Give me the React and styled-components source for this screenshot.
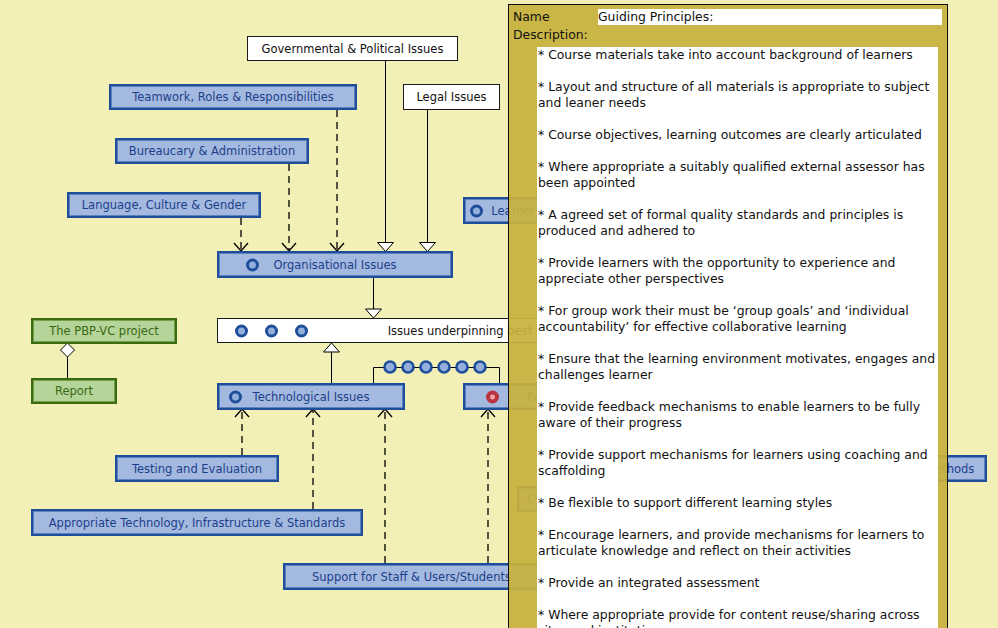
import React from "react";
import styled, { createGlobalStyle, css } from "styled-components";

const Global = createGlobalStyle`
  html, body { margin: 0; padding: 0; background: #f2f0b7; }
  #root { width: 998px; height: 628px; }
`;

const Canvas = styled.div`
  position: relative;
  width: 998px;
  height: 628px;
  overflow: hidden;
  background: #f2f0b7;
  font-family: "DejaVu Sans", "Noto Sans", sans-serif;
`;

const Wires = styled.svg`
  position: absolute;
  left: 0;
  top: 0;
`;

const variants = {
  blue: css`
    background: #a3b9e0;
    border: 2px solid #1e4d9a;
    box-shadow: inset 0 0 0 1px #5d80bf;
    color: #1d3f8a;
  `,
  white: css`
    background: #ffffff;
    border: 1px solid #1a1a1a;
    color: #111;
  `,
  green: css`
    background: #b5d499;
    border: 2px solid #3a6b10;
    box-shadow: inset 0 0 0 1px #74a04a;
    color: #3a6914;
  `,
};

const Node = styled.div`
  position: absolute;
  left: ${(p) => p.$x}px;
  top: ${(p) => p.$y}px;
  width: ${(p) => p.$w}px;
  height: ${(p) => p.$h}px;
  box-sizing: border-box;
  display: flex;
  align-items: center;
  justify-content: center;
  font-size: 11.5px;
  white-space: nowrap;
  ${(p) => variants[p.$kind]}
`;

const Icons = styled.div`
  position: absolute;
  left: ${(p) => p.$left}px;
  top: 50%;
  transform: translateY(-50%);
  display: flex;
  gap: 17px;
`;

const Ring = styled.span`
  display: block;
  width: 13px;
  height: 13px;
  box-sizing: border-box;
  border-radius: 50%;
  border: 3px solid #1f4e9b;
  background: #93afdc;
`;

const RedRing = styled(Ring)`
  border: 4px solid #b9343c;
  background: #f1a5ab;
`;

const Panel = styled.section`
  position: absolute;
  left: 508px;
  top: 4px;
  width: 440px;
  height: 640px;
  box-sizing: border-box;
  border: 1px solid #111;
  background: rgba(199, 177, 61, 0.93);
  padding: 4px 5px 0 4px;
  display: flex;
  flex-direction: column;
  font-family: "DejaVu Sans", "Noto Sans", sans-serif;
  font-size: 12.4px;
  color: #111;
`;

const FieldRow = styled.div`
  display: grid;
  grid-template-columns: 85px 1fr;
  align-items: center;
  height: 16px;
  line-height: 16px;
`;

const NameInput = styled.div`
  background: #fff;
  height: 16px;
  white-space: nowrap;
`;

const DescLabel = styled.div`
  margin-top: 2px;
  height: 16px;
  line-height: 16px;
`;

const DescBox = styled.div`
  margin: 4px 4px 0 24px;
  flex: 1;
  background: #fff;
  padding-left: 1px;
  line-height: 16px;
`;

const Para = styled.p`
  margin: 0 0 16px;
`;

const Line = styled.span`
  display: block;
  white-space: nowrap;
`;

const nodes = [
  { t: "Governmental & Political Issues", k: "white", x: 247, y: 36, w: 211, h: 25 },
  { t: "Teamwork, Roles & Responsibilities", k: "blue", x: 109, y: 84, w: 248, h: 26 },
  { t: "Legal Issues", k: "white", x: 403, y: 84, w: 97, h: 26 },
  { t: "Bureaucary & Administration", k: "blue", x: 115, y: 138, w: 194, h: 26 },
  { t: "Language, Culture & Gender", k: "blue", x: 67, y: 192, w: 194, h: 26 },
  { t: "Learner Issues", k: "blue", x: 463, y: 197, w: 140, h: 27, icon: 5 },
  { t: "Organisational Issues", k: "blue", x: 217, y: 251, w: 236, h: 27, icon: 27 },
  { t: "Issues underpinning best practice", k: "white", x: 217, y: 318, w: 536, h: 25, dots: 3 },
  { t: "The PBP-VC project", k: "green", x: 31, y: 318, w: 146, h: 26 },
  { t: "Report", k: "green", x: 31, y: 378, w: 86, h: 26 },
  { t: "Technological Issues", k: "blue", x: 217, y: 383, w: 188, h: 27, icon: 10 },
  { t: "Pedagogical Issues", k: "blue", x: 463, y: 383, w: 236, h: 27, red: 21 },
  { t: "Testing and Evaluation", k: "blue", x: 115, y: 455, w: 164, h: 27 },
  { t: "Communication Issues", k: "blue", x: 517, y: 486, w: 150, h: 26 },
  { t: "Teaching & Learning Methods", k: "blue", x: 792, y: 455, w: 195, h: 27 },
  { t: "Appropriate Technology, Infrastructure & Standards", k: "blue", x: 31, y: 509, w: 332, h: 27 },
  { t: "Support for Staff & Users/Students", k: "blue", x: 283, y: 563, w: 257, h: 27 },
];

const principles = [
  ["* Course materials take into account background of learners"],
  ["* Layout and structure of all materials is appropriate to subject", "and leaner needs"],
  ["* Course objectives, learning outcomes are clearly articulated"],
  ["* Where appropriate a suitably qualified external assessor has", "been appointed"],
  ["* A agreed set of formal quality standards and principles is", "produced and adhered to"],
  ["* Provide learners with the opportunity to experience and", "appreciate other perspectives"],
  ["* For group work their must be \u2018group goals\u2019 and \u2018individual", "accountability\u2019 for effective collaborative learning"],
  ["* Ensure that the learning environment motivates, engages and", "challenges learner"],
  ["* Provide feedback mechanisms to enable learners to be fully", "aware of their progress"],
  ["* Provide support mechanisms for learners using coaching and", "scaffolding"],
  ["* Be flexible to support different learning styles"],
  ["* Encourage learners, and provide mechanisms for learners to", "articulate knowledge and reflect on their activities"],
  ["* Provide an integrated assessment"],
  ["* Where appropriate provide for content reuse/sharing across", "sites and institutions"],
];

const Vdown = ({ x, y }) => (
  <polyline points={`${x - 7},${y - 8} ${x},${y} ${x + 7},${y - 8}`} fill="none" stroke="#000" strokeWidth="1.3" />
);
const Vup = ({ x, y }) => (
  <polyline points={`${x - 7},${y + 8} ${x},${y} ${x + 7},${y + 8}`} fill="none" stroke="#000" strokeWidth="1.3" />
);
const TriDown = ({ x, y }) => (
  <polygon points={`${x - 8},${y - 9} ${x + 8},${y - 9} ${x},${y}`} fill="#fff" stroke="#000" strokeWidth="1" />
);
const TriUp = ({ x, y }) => (
  <polygon points={`${x - 8},${y + 9} ${x + 8},${y + 9} ${x},${y}`} fill="#fff" stroke="#000" strokeWidth="1" />
);

function Connectors() {
  const dash = { stroke: "#000", strokeWidth: 1.3, strokeDasharray: "7 5", fill: "none" };
  const solid = { stroke: "#000", strokeWidth: 1, fill: "none" };
  return (
    <Wires width="998" height="628" viewBox="0 0 998 628">
      <line x1="241" y1="218" x2="241" y2="250" {...dash} />
      <line x1="289" y1="164" x2="289" y2="250" {...dash} />
      <line x1="337" y1="110" x2="337" y2="250" {...dash} />
      <Vdown x={241} y={251} />
      <Vdown x={289} y={251} />
      <Vdown x={337} y={251} />
      <line x1="385.5" y1="60" x2="385.5" y2="243" {...solid} />
      <TriDown x={385.5} y={251.5} />
      <line x1="427.5" y1="109" x2="427.5" y2="243" {...solid} />
      <TriDown x={427.5} y={251.5} />
      <line x1="373.5" y1="277" x2="373.5" y2="309" {...solid} />
      <TriDown x={373.5} y={318} />
      <line x1="331.5" y1="383" x2="331.5" y2="352" {...solid} />
      <TriUp x={331.5} y={343} />
      <line x1="67.5" y1="357" x2="67.5" y2="378" {...solid} />
      <polygon points="67.5,343 74.5,350 67.5,357 60.5,350" fill="#fff" stroke="#000" strokeWidth="1" />
      <polyline points="373.5,383 373.5,367.5 499.5,367.5 499.5,383" {...solid} />
      {[390, 408, 426, 444, 462, 480].map((cx) => (
        <circle key={cx} cx={cx} cy={367} r="5.5" fill="#93afdc" stroke="#1f4e9b" strokeWidth="2.6" />
      ))}
      <line x1="242" y1="455" x2="242" y2="410" {...dash} />
      <line x1="313" y1="509" x2="313" y2="410" {...dash} />
      <line x1="385" y1="563" x2="385" y2="410" {...dash} />
      <line x1="488" y1="563" x2="488" y2="410" {...dash} />
      <Vup x={242} y={409} />
      <Vup x={313} y={409} />
      <Vup x={385} y={409} />
      <Vup x={488} y={409} />
    </Wires>
  );
}

export default function App() {
  return (
    <>
      <Global />
      <Canvas>
        <Connectors />
        {nodes.map((n) => (
          <Node key={n.t} $kind={n.k} $x={n.x} $y={n.y} $w={n.w} $h={n.h}>
            {n.icon != null && (
              <Icons $left={n.icon}>
                <Ring />
              </Icons>
            )}
            {n.red != null && (
              <Icons $left={n.red}>
                <RedRing />
              </Icons>
            )}
            {n.dots && (
              <Icons $left={17}>
                {Array.from({ length: n.dots }).map((_, i) => (
                  <Ring key={i} />
                ))}
              </Icons>
            )}
            {n.t}
          </Node>
        ))}
        <Panel>
          <FieldRow>
            <span>Name</span>
            <NameInput>Guiding Principles:</NameInput>
          </FieldRow>
          <DescLabel>Description:</DescLabel>
          <DescBox>
            {principles.map((p, i) => (
              <Para key={i}>
                {p.map((l) => (
                  <Line key={l}>{l}</Line>
                ))}
              </Para>
            ))}
          </DescBox>
        </Panel>
      </Canvas>
    </>
  );
}
